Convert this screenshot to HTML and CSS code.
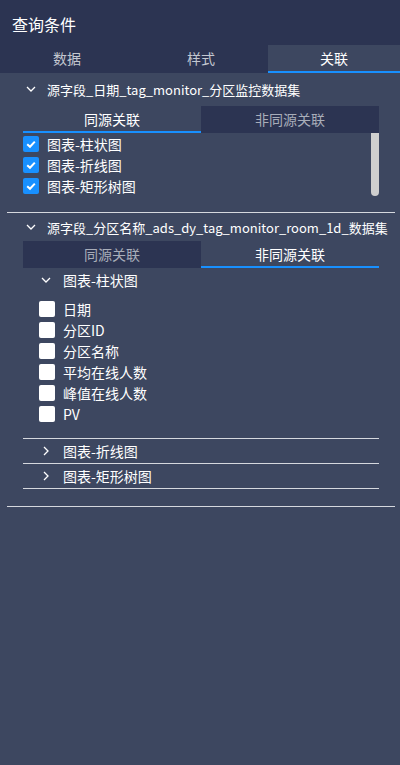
FILE: index.html
```html
<!DOCTYPE html>
<html lang="zh">
<head>
<meta charset="utf-8">
<link rel="stylesheet" href="styles.css">
</head>
<body>
<div class="panel">
  <div class="header">查询条件</div>
  <div class="tabs">
    <div class="tab">数据</div>
    <div class="tab">样式</div>
    <div class="tab active">关联</div>
  </div>
  <div class="content">
    <div class="section first">
      <div class="sec-title">
        <span class="chev"><svg width="16" height="16" viewBox="0 0 16 16"><polyline points="4,6 8,10 12,6" fill="none" stroke="#fff" stroke-width="1.3"/></svg></span>
        <span>源字段_日期_tag_monitor_分区监控数据集</span>
      </div>
      <div class="subtabs">
        <div class="subtab active">同源关联</div>
        <div class="subtab">非同源关联</div>
      </div>
      <div class="list-wrap">
        <div class="list">
          <div class="row"><span class="cb checked"><svg width="16" height="16" viewBox="0 0 16 16"><polyline points="4.2,8.2 7,10.8 11.8,5.6" fill="none" stroke="#fff" stroke-width="2"/></svg></span><span>图表-柱状图</span></div>
          <div class="row"><span class="cb checked"><svg width="16" height="16" viewBox="0 0 16 16"><polyline points="4.2,8.2 7,10.8 11.8,5.6" fill="none" stroke="#fff" stroke-width="2"/></svg></span><span>图表-折线图</span></div>
          <div class="row"><span class="cb checked"><svg width="16" height="16" viewBox="0 0 16 16"><polyline points="4.2,8.2 7,10.8 11.8,5.6" fill="none" stroke="#fff" stroke-width="2"/></svg></span><span>图表-矩形树图</span></div>
        </div>
        <div class="scrollbar"></div>
      </div>
    </div>
    <div class="divider"></div>
    <div class="section">
      <div class="sec-title">
        <span class="chev"><svg width="16" height="16" viewBox="0 0 16 16"><polyline points="4,6 8,10 12,6" fill="none" stroke="#fff" stroke-width="1.3"/></svg></span>
        <span>源字段_分区名称_ads_dy_tag_monitor_room_1d_数据集</span>
      </div>
      <div class="subtabs">
        <div class="subtab">同源关联</div>
        <div class="subtab active">非同源关联</div>
      </div>
      <div class="tree">
        <div class="node open">
          <div class="node-title"><span class="chev"><svg width="16" height="16" viewBox="0 0 16 16"><polyline points="4,6 8,10 12,6" fill="none" stroke="#fff" stroke-width="1.3"/></svg></span><span>图表-柱状图</span></div>
          <div class="fields">
            <div class="row"><span class="cb"></span><span>日期</span></div>
            <div class="row"><span class="cb"></span><span>分区ID</span></div>
            <div class="row"><span class="cb"></span><span>分区名称</span></div>
            <div class="row"><span class="cb"></span><span>平均在线人数</span></div>
            <div class="row"><span class="cb"></span><span>峰值在线人数</span></div>
            <div class="row"><span class="cb"></span><span>PV</span></div>
          </div>
        </div>
        <div class="node">
          <div class="node-title"><span class="chev"><svg width="16" height="16" viewBox="0 0 16 16"><polyline points="6,4 10,8 6,12" fill="none" stroke="#fff" stroke-width="1.3"/></svg></span><span>图表-折线图</span></div>
        </div>
        <div class="node">
          <div class="node-title"><span class="chev"><svg width="16" height="16" viewBox="0 0 16 16"><polyline points="6,4 10,8 6,12" fill="none" stroke="#fff" stroke-width="1.3"/></svg></span><span>图表-矩形树图</span></div>
        </div>
      </div>
    </div>
    <div class="divider bottom"></div>
  </div>
</div>
</body>
</html>
```

FILE: styles.css
```css
* { box-sizing: border-box; }
html, body { margin: 0; padding: 0; }
body {
  font-family: "Noto Sans CJK SC", "Microsoft YaHei", sans-serif;
  color: #fff;
  background: #3d4760;
}
.panel {
  width: 400px;
  height: 765px;
  background: #3d4760;
  display: flex;
  flex-direction: column;
}
.header {
  height: 45px;
  background: #2c3452;
  font-size: 16px;
  padding-left: 12px;
  padding-top: 3px;
  display: flex;
  align-items: center;
}
.tabs {
  display: grid;
  grid-template-columns: 134px 134px 132px;
  height: 28px;
  background: #2c3452;
}
.tab {
  font-size: 14px;
  color: #c3c7d0;
  display: flex;
  align-items: center;
  justify-content: center;
  border-bottom: 2px solid transparent;
}
.tab.active {
  background: #3d4760;
  color: #fff;
  border-bottom-color: #1890ff;
}
.content {
  margin: 0 5px 0 7px;
}
.section { padding: 0 16px; }
.section.first { padding-top: 2px; }
.sec-title {
  height: 28px;
  display: flex;
  align-items: center;
  font-size: 13px;
  white-space: nowrap;
}
.section.first .sec-title { margin-bottom: 3px; }
.chev {
  width: 16px;
  height: 16px;
  display: inline-flex;
  margin-right: 8px;
  flex: none;
}
.chev svg { display: block; }
.subtabs {
  display: grid;
  grid-template-columns: 1fr 1fr;
  height: 27px;
}
.subtab {
  background: #2c3452;
  color: #a8adb9;
  font-size: 14px;
  display: flex;
  align-items: center;
  justify-content: center;
  border-bottom: 2px solid transparent;
}
.subtab.active {
  background: transparent;
  color: #fff;
  border-bottom-color: #1890ff;
}
.list-wrap {
  display: flex;
  height: 64px;
}
.list { flex: 1; }
.row {
  height: 21px;
  display: flex;
  align-items: center;
  font-size: 14px;
}
.cb {
  width: 16px;
  height: 16px;
  border-radius: 2px;
  background: #fff;
  margin-right: 8px;
  flex: none;
  display: inline-flex;
}
.cb.checked { background: #1890ff; }
.cb svg { display: block; }
.scrollbar {
  width: 8px;
  height: 63px;
  background: #cfcfcf;
  border-radius: 0 0 5px 5px;
}
.divider {
  height: 1px;
  background: #d5d8de;
  margin-top: 15px;
}
.divider.bottom { margin-top: 17px; }
.node-title {
  height: 24px;
  display: flex;
  align-items: center;
  padding-left: 15px;
  font-size: 14px;
}
.node-title .chev { margin-right: 9px; }
.fields {
  padding: 6px 0 14px 16px;
}
.node { border-bottom: 1px solid #d5d8de; }
```
